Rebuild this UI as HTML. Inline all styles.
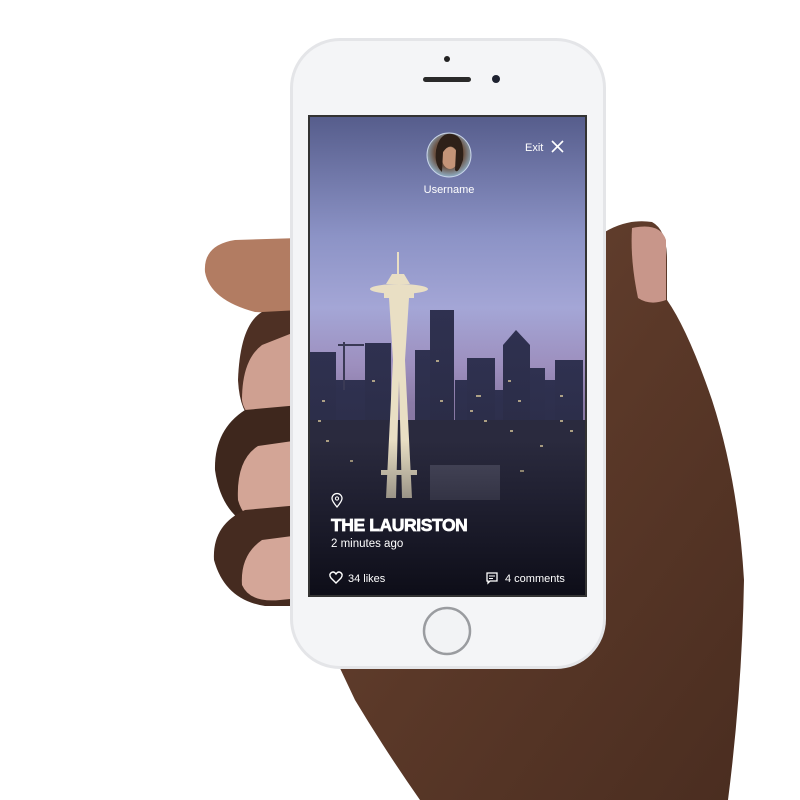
<!DOCTYPE html>
<html><head><meta charset="utf-8"><style>
html,body{margin:0;padding:0;background:#fff;width:800px;height:800px;overflow:hidden}
svg{display:block}
text{font-family:"Liberation Sans",sans-serif;fill:#fff}
</style></head><body>
<svg width="800" height="800" viewBox="0 0 800 800" xmlns="http://www.w3.org/2000/svg">
<defs>
<linearGradient id="sky" x1="0" y1="0" x2="0" y2="1">
<stop offset="0" stop-color="#565d8c"/><stop offset="0.25" stop-color="#8c93c6"/>
<stop offset="0.4" stop-color="#a4a6d6"/><stop offset="0.52" stop-color="#9d8fbe"/>
<stop offset="0.6" stop-color="#8a7aa6"/><stop offset="1" stop-color="#6a6080"/></linearGradient>
<linearGradient id="shade" x1="0" y1="0" x2="0" y2="1">
<stop offset="0" stop-color="#0e0e1a" stop-opacity="0"/><stop offset="1" stop-color="#0c0c16" stop-opacity="0.95"/></linearGradient>
<linearGradient id="skin" x1="0" y1="0" x2="1" y2="1">
<stop offset="0" stop-color="#6b4533"/><stop offset="0.5" stop-color="#5a3828"/><stop offset="1" stop-color="#4a2d20"/></linearGradient>
<linearGradient id="bld" x1="0" y1="0" x2="0" y2="1">
<stop offset="0" stop-color="#2f3150"/><stop offset="1" stop-color="#242538"/></linearGradient>
<radialGradient id="av" cx="0.5" cy="0.45" r="0.55"><stop offset="0" stop-color="#b98a6a"/><stop offset="0.6" stop-color="#6b5040"/><stop offset="1" stop-color="#8fb0c8"/></radialGradient>
</defs>
<!-- palm / right hand -->
<path d="M600 235 Q625 218 652 222 Q667 230 667 260 L667 300 Q688 330 712 400 Q738 480 744 580 Q742 690 728 800 L420 800 Q385 750 355 700 L338 664 L330 600 L330 300 Z" fill="url(#skin)"/>
<path d="M632 228 Q660 222 666 240 L666 300 Q650 306 638 298 Q630 260 632 228Z" fill="#c8968a"/>
<!-- left fingers -->
<path d="M300 238 L235 240 Q203 245 205 272 Q210 300 255 312 L300 314 Z" fill="#b27c62"/>
<path d="M300 310 L262 312 Q240 325 238 380 Q240 420 262 425 L300 425 Z" fill="#4e3024"/>
<path d="M300 330 L262 345 Q242 360 242 400 Q245 420 270 422 L300 420 Z" fill="#cfa091"/>
<path d="M300 405 L245 410 Q214 430 215 470 Q222 520 262 530 L300 530 Z" fill="#3e271d"/>
<path d="M300 440 L258 446 Q236 460 238 500 Q245 526 275 526 L300 524 Z" fill="#d3a596"/>
<path d="M300 505 L245 510 Q212 525 214 560 Q225 600 265 606 L300 606 Z" fill="#452b20"/>
<path d="M300 535 L262 540 Q240 555 242 585 Q250 603 280 600 L300 598 Z" fill="#d4a698"/>
<!-- phone -->
<rect x="290" y="38" width="316" height="631" rx="50" fill="#e4e5e8"/>
<rect x="293" y="41" width="310" height="625" rx="47" fill="#f4f5f7"/>
<circle cx="447" cy="59" r="3" fill="#222"/>
<rect x="423" y="77" width="48" height="5" rx="2.5" fill="#2a2a2a"/>
<circle cx="496" cy="79" r="4" fill="#1e2230"/>
<circle cx="447" cy="631" r="23" fill="#f2f3f5" stroke="#9a9ca0" stroke-width="2.5"/>
<!-- screen -->
<rect x="308" y="115" width="279" height="482" fill="#333"/>
<rect x="310" y="117" width="275" height="478" fill="url(#sky)"/>
<g fill="url(#bld)">
<rect x="310" y="352" width="26" height="243"/>
<rect x="336" y="380" width="30" height="215"/>
<rect x="365" y="343" width="26" height="252"/>
<rect x="415" y="350" width="20" height="245"/>
<rect x="430" y="310" width="24" height="285"/>
<rect x="455" y="380" width="12" height="215"/>
<rect x="467" y="358" width="28" height="237"/>
<rect x="495" y="390" width="10" height="205"/>
<path d="M503 345 L516 330 L530 345 L530 595 L503 595Z"/>
<rect x="530" y="368" width="15" height="227"/>
<rect x="545" y="380" width="12" height="215"/>
<rect x="555" y="360" width="28" height="235"/>
</g>
<rect x="310" y="420" width="275" height="175" fill="#2a2a3e"/>
<path d="M338 345 L364 345 M344 342 L344 390" stroke="#3a3a55" stroke-width="2"/>
<g fill="#d8c79a" opacity="0.75">
<rect x="318" y="420" width="3" height="2"/><rect x="326" y="440" width="3" height="2"/><rect x="440" y="400" width="3" height="2"/>
<rect x="476" y="395" width="5" height="2"/><rect x="510" y="430" width="3" height="2"/><rect x="540" y="445" width="3" height="2"/>
<rect x="560" y="420" width="3" height="2"/><rect x="520" y="470" width="4" height="2"/><rect x="350" y="460" width="3" height="2"/>
<rect x="470" y="410" width="3" height="2"/><rect x="484" y="420" width="3" height="2"/><rect x="508" y="380" width="3" height="2"/>
<rect x="518" y="400" width="3" height="2"/><rect x="560" y="395" width="3" height="2"/><rect x="570" y="430" width="3" height="2"/>
<rect x="322" y="400" width="3" height="2"/><rect x="372" y="380" width="3" height="2"/><rect x="436" y="360" width="3" height="2"/>
</g>
<rect x="430" y="465" width="70" height="35" fill="#4a4a5e"/>
<!-- space needle -->
<g fill="#e9dfc4">
<rect x="397" y="252" width="2" height="22"/>
<path d="M392 274 L404 274 L410 284 L386 284Z"/>
<ellipse cx="399" cy="289" rx="29" ry="5"/>
<rect x="384" y="292" width="30" height="6"/>
<path d="M389 298 L409 298 L405 360 L412 498 L402 498 L399 380 L396 498 L386 498 L393 360Z"/>
<rect x="381" y="470" width="36" height="5"/>
</g>
<rect x="310" y="440" width="275" height="155" fill="url(#shade)"/>
<!-- avatar -->
<circle cx="449" cy="155" r="22" fill="url(#av)" stroke="#c9d4e8" stroke-width="1"/>
<ellipse cx="450" cy="158" rx="8" ry="11" fill="#c49478"/>
<path d="M436 150 Q440 132 452 134 Q465 136 463 160 Q458 175 455 170 L456 150 Q450 142 443 152 L442 172 Q434 165 436 150Z" fill="#2e2018"/>
<text x="449" y="193" font-size="11" text-anchor="middle">Username</text>
<text x="525" y="151" font-size="11">Exit</text>
<path d="M552 141 L563 152 M563 141 L552 152" stroke="#fff" stroke-width="1.6"/>
<!-- location pin -->
<path d="M337 507 Q332 501 332 498.5 A5 5 0 0 1 342 498.5 Q342 501 337 507Z" fill="none" stroke="#fff" stroke-width="1.3"/>
<circle cx="337" cy="498.5" r="1.6" fill="none" stroke="#fff" stroke-width="1"/>
<text x="331" y="531" font-size="17.5" font-weight="bold" letter-spacing="-0.4" stroke="#fff" stroke-width="0.7">THE LAURISTON</text>
<text x="331" y="547" font-size="11.5">2 minutes ago</text>
<path d="M336 583 L331 578 Q328.5 574.5 331.5 572.5 Q334 571 336 574 Q338 571 340.5 572.5 Q343.5 574.5 341 578Z" fill="none" stroke="#fff" stroke-width="1.4"/>
<text x="348" y="582" font-size="11">34 likes</text>
<path d="M487 573 h10 v8 h-7 l-2 2 v-2 h-1Z" fill="none" stroke="#fff" stroke-width="1.3"/>
<path d="M489 576 h6 M489 578.5 h4" stroke="#fff" stroke-width="1"/>
<text x="505" y="582" font-size="11">4 comments</text>
</svg>
</body></html>
